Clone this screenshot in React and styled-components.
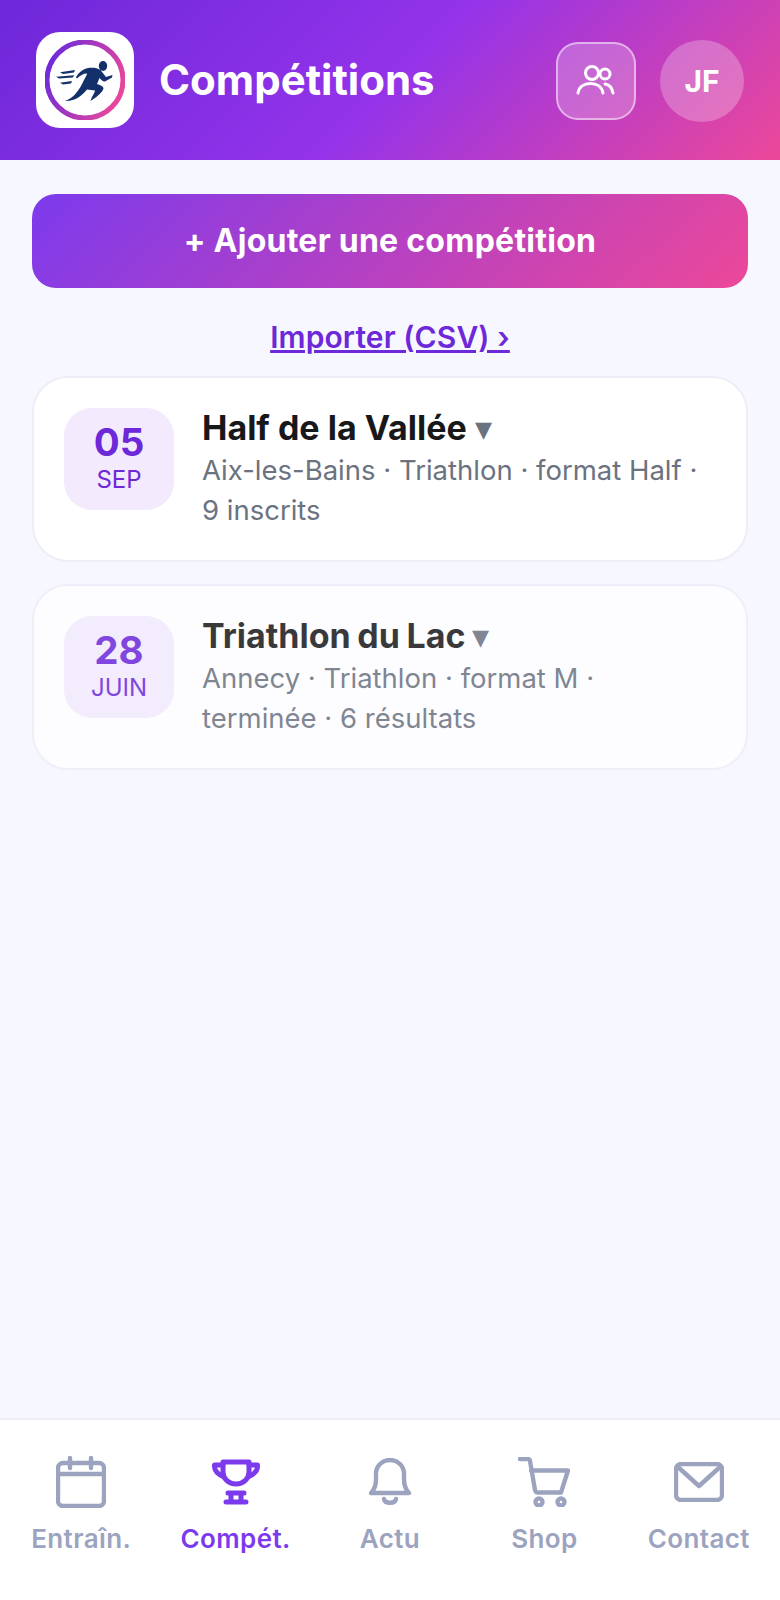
import styled, { createGlobalStyle } from "styled-components"

const GlobalStyle = createGlobalStyle`
    * { box-sizing: border-box; }
    html, body { margin: 0; padding: 0; background: #f7f7ff; }
    body { font-family: Inter, "Liberation Sans", sans-serif; }
`;

const competitions = [
    { id: 1, day: "05", month: "SEP", name: "Half de la Vallée", lines: ["Aix-les-Bains · Triathlon · format Half ·", "9 inscrits"] },
    { id: 2, day: "28", month: "JUIN", name: "Triathlon du Lac", lines: ["Annecy · Triathlon · format M ·", "terminée · 6 résultats"], past: true },
];

const Logo = () => (
    <svg width="80" height="80" viewBox="0 0 80 80" fill="none">
        <defs>
            <linearGradient id="ring" x1="0" y1="0.3" x2="1" y2="0.7">
                <stop offset="0" stopColor="#6d2bd9" />
                <stop offset="1" stopColor="#ec4899" />
            </linearGradient>
        </defs>
        <circle cx="40" cy="40" r="38" stroke="url(#ring)" strokeWidth="5" />
        <g fill="#14306b">
            <ellipse cx="58" cy="26" rx="4.2" ry="5" />
            <path d="M31 37.5C33 33 38 29 43 28C47 27.5 52 27.5 55.5 30L61 37L67.5 35L67 37.5L60 41.5C58 42 57 40.5 54.5 38L52 44C55 45 58 46 58.5 48C58.5 50.5 54 56 45.5 61C47 56 50 52.5 50 50.5L42 49.5C37 55.5 30 61.5 20 61C28 58 33 52 37 44C40 38 42 35 42 33.5C38 33.5 35 35.5 32 38.5Z" />
            <path d="M15 32.2L30 30L29 32.4L18 34Z" />
            <path d="M11 36.8L29 35.2L28 37.4L14 38.4Z" />
            <path d="M15 42.8L27 41L26 43.4L18 44.4Z" />
        </g>
    </svg>
);

const TeamIcon = () => (
    <svg width="40" height="34" viewBox="0 0 40 34" fill="none" stroke="#fff" strokeWidth="3" strokeLinecap="round">
        <circle cx="16" cy="9" r="6.5" />
        <circle cx="29" cy="10" r="5" />
        <path d="M2 29C3 23 8 19.5 14.5 19.5C21 19.5 26 23 27 29" />
        <path d="M29 20C33 20.5 36 24 37 29" />
    </svg>
);

const CalendarIcon = () => (
    <svg viewBox="0 0 50 52">
        <rect x="2" y="7" width="46" height="43" rx="5" />
        <path d="M2 18H48M14 2V12M35 2V12" />
    </svg>
);

const TrophyIcon = () => (
    <svg viewBox="0 0 50 46">
        <g strokeWidth="5">
            <path d="M12 3H38V13C38 20 32 25 25 25C18 25 12 20 12 13Z" />
            <path d="M12 6H3.5C3 11 6 15 13 18M38 6H46.5C47 11 44 15 37 18" />
            <path d="M17 34H33M20 34V43M30 34V43M15 43H35" />
        </g>
    </svg>
);

const BellIcon = () => (
    <svg viewBox="0 0 44 48">
        <path d="M3 35C7 31 8 27 8 21V16C8 8 14 2 22 2C30 2 36 8 36 16V21C36 27 37 31 41 35Z" />
        <path d="M16 41C17 46 27 46 28 41" />
    </svg>
);

const CartIcon = () => (
    <svg viewBox="0 0 52 50">
        <path d="M2 2H10C11 2 12 3 12 4L17 33C17.5 35 18 35.5 20 35.5H43L50 13.5H13" />
        <circle cx="21" cy="45" r="3.5" />
        <circle cx="43" cy="45" r="3.5" />
    </svg>
);

const MailIcon = () => (
    <svg viewBox="0 0 50 40">
        <rect x="2" y="2" width="46" height="36" rx="5" />
        <path d="M4 5L25 24L46 5" />
    </svg>
);

const navItems = [
    { label: "Entraîn.", icon: <CalendarIcon />, w: 50, h: 52 },
    { label: "Compét.", icon: <TrophyIcon />, w: 50, h: 46, active: true },
    { label: "Actu", icon: <BellIcon />, w: 44, h: 48 },
    { label: "Shop", icon: <CartIcon />, w: 52, h: 50 },
    { label: "Contact", icon: <MailIcon />, w: 50, h: 40 },
];

const App = () => {
    return (
        <Page>
            <GlobalStyle />
            <Header>
                <LogoBox>
                    <Logo />
                </LogoBox>
                <Title>Compétitions</Title>
                <TeamButton>
                    <TeamIcon />
                </TeamButton>
                <Avatar>JF</Avatar>
            </Header>
            <Main>
                <AddButton>+ Ajouter une compétition</AddButton>
                <ImportLink>Importer (CSV) ›</ImportLink>
                <CardList>
                    {competitions.map((c) => (
                        <Card key={c.id} $past={c.past}>
                            <DateBox>
                                <Day>{c.day}</Day>
                                <Month>{c.month}</Month>
                            </DateBox>
                            <Info>
                                <Name $tight={c.past}>
                                    {c.name} <Caret>▾</Caret>
                                </Name>
                                <Details>
                                    {c.lines.map((line) => (
                                        <div key={line}>{line}</div>
                                    ))}
                                </Details>
                            </Info>
                        </Card>
                    ))}
                </CardList>
            </Main>
            <BottomNav>
                {navItems.map((item) => (
                    <NavItem key={item.label} $active={item.active}>
                        <NavIcon $w={item.w} $h={item.h}>{item.icon}</NavIcon>
                        <NavLabel>{item.label}</NavLabel>
                    </NavItem>
                ))}
            </BottomNav>
        </Page>
    )
}

const Page = styled.div`
    width: 780px;
    height: 1600px;
    display: flex;
    flex-direction: column;
    background: #f7f7ff;
`;

const Header = styled.header`
    height: 160px;
    flex: none;
    display: flex;
    align-items: center;
    padding: 0 36px;
    background: linear-gradient(135deg, #6d28d9 0%, #9333ea 50%, #ec4899 100%);
`;

const LogoBox = styled.div`
    width: 98px;
    height: 96px;
    border-radius: 24px;
    background: #fff;
    display: flex;
    align-items: center;
    justify-content: center;
    flex: none;
`;

const Title = styled.h1`
    margin: 0 0 0 25px;
    flex: 1;
    font-size: 42px;
    line-height: 1;
    font-weight: 700;
    color: #fff;
`;

const TeamButton = styled.button`
    width: 80px;
    height: 78px;
    margin-top: 2px;
    border-radius: 22px;
    border: 2px solid rgba(255, 255, 255, 0.5);
    background: rgba(255, 255, 255, 0.22);
    display: flex;
    align-items: center;
    justify-content: center;
    padding: 0;
`;

const Avatar = styled.div`
    width: 84px;
    height: 82px;
    margin: 2px 0 0 24px;
    border-radius: 50%;
    background: rgba(255, 255, 255, 0.25);
    color: #fff;
    font-size: 30px;
    font-weight: 700;
    display: flex;
    align-items: center;
    justify-content: center;
`;

const Main = styled.main`
    flex: 1;
    padding: 34px 32px 0;
    display: flex;
    flex-direction: column;
`;

const AddButton = styled.button`
    height: 94px;
    padding: 0 0 2px;
    border: none;
    border-radius: 24px;
    background: linear-gradient(135deg, #7c3aed, #ec4899);
    color: #fff;
    font-family: inherit;
    font-size: 32px;
    letter-spacing: 0.25px;
    font-weight: 700;
`;

const ImportLink = styled.a`
    margin-top: 31px;
    margin-bottom: 1px;
    text-align: center;
    font-size: 30px;
    letter-spacing: 0.1px;
    line-height: 36px;
    font-weight: 600;
    color: #6d28d9;
    text-decoration: underline;
`;

const CardList = styled.div`
    margin-top: 20px;
    display: flex;
    flex-direction: column;
    gap: 22px;
`;

const Card = styled.article`
    height: 186px;
    padding: 30px;
    display: flex;
    gap: 28px;
    background: #fff;
    border: 2px solid #eeeef8;
    border-radius: 36px;
    opacity: ${(props) => (props.$past ? 0.85 : 1)};
`;

const DateBox = styled.div`
    width: 110px;
    height: 102px;
    flex: none;
    padding-bottom: 4px;
    border-radius: 28px;
    background: #f3ebfd;
    color: #6d28d9;
    display: flex;
    flex-direction: column;
    align-items: center;
    justify-content: center;
`;

const Day = styled.div`
    font-size: 38.5px;
    line-height: 44px;
    font-weight: 700;
`;

const Month = styled.div`
    font-size: 24px;
    line-height: 31px;
    font-weight: 400;
`;

const Info = styled.div`
    min-width: 0;
`;

const Name = styled.div`
    font-size: 34px;
    line-height: 40px;
    font-weight: 700;
    color: #18181b;
    word-spacing: ${(props) => (props.$tight ? "-1.5px" : "0")};
`;

const Caret = styled.span`
    color: #6b7280;
    font-weight: 400;
`;

const Details = styled.div`
    margin-top: 2px;
    font-size: 27.5px;
    line-height: 40px;
    color: #6b7280;
`;

const BottomNav = styled.nav`
    height: 182px;
    flex: none;
    padding: 0 4px;
    display: grid;
    grid-template-columns: repeat(5, 1fr);
    background: #fff;
    border-top: 2px solid #eeeef8;
`;

const NavItem = styled.div`
    display: flex;
    flex-direction: column;
    align-items: center;
    color: ${(props) => (props.$active ? "#7c3aed" : "#9ca3bf")};
`;

const NavIcon = styled.div`
    height: 64px;
    margin-top: 30px;
    display: flex;
    align-items: center;
    justify-content: center;

    svg {
        width: ${(props) => props.$w}px;
        height: ${(props) => props.$h}px;
        fill: none;
        stroke: currentColor;
        stroke-width: 4.4;
        stroke-linecap: round;
        stroke-linejoin: round;
    }
`;

const NavLabel = styled.div`
    margin-top: 9px;
    font-size: 26px;
    letter-spacing: 0.4px;
    line-height: 32px;
    font-weight: 600;
`;

export default App;
